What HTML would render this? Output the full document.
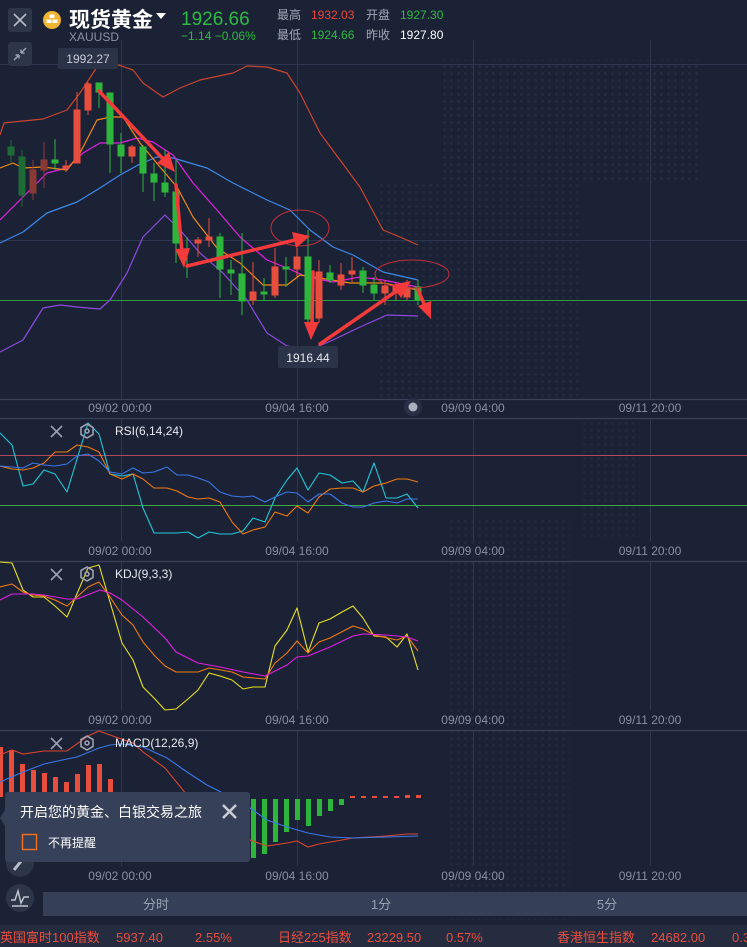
<!DOCTYPE html>
<html><head><meta charset="utf-8"><style>
html,body{margin:0;padding:0;background:#1c2236;width:747px;height:947px;overflow:hidden;font-family:"Liberation Sans","Noto Sans CJK SC",sans-serif;}
svg{position:absolute;left:0;top:0}
.t{font-family:"Liberation Sans","Noto Sans CJK SC",sans-serif}
</style></head><body>
<svg width="747" height="947" viewBox="0 0 747 947" class="t">
<defs>
<pattern id="dots" width="7" height="7" patternUnits="userSpaceOnUse"><circle cx="3.5" cy="3.5" r="1.5" fill="#262d42"/></pattern>
</defs>
<rect width="747" height="947" fill="#1c2236"/>
<!-- faint map dots -->
<rect x="440" y="60" width="260" height="120" fill="url(#dots)" opacity="0.8"/>
<rect x="380" y="180" width="200" height="220" fill="url(#dots)" opacity="0.7"/>
<rect x="450" y="520" width="120" height="400" fill="url(#dots)" opacity="0.6"/>
<rect x="580" y="420" width="60" height="120" fill="url(#dots)" opacity="0.5"/>

<!-- grid main -->
<g stroke="#2e3650" stroke-width="1">
<line x1="121.5" y1="40" x2="121.5" y2="399"/><line x1="297.5" y1="40" x2="297.5" y2="399"/><line x1="473.5" y1="40" x2="473.5" y2="399"/><line x1="650.5" y1="40" x2="650.5" y2="399"/>
<line x1="0" y1="64.5" x2="747" y2="64.5"/><line x1="0" y1="240.5" x2="747" y2="240.5"/>
<line x1="121.5" y1="418" x2="121.5" y2="541"/><line x1="297.5" y1="418" x2="297.5" y2="541"/><line x1="473.5" y1="418" x2="473.5" y2="541"/><line x1="650.5" y1="418" x2="650.5" y2="541"/>
<line x1="121.5" y1="562" x2="121.5" y2="710"/><line x1="297.5" y1="562" x2="297.5" y2="710"/><line x1="473.5" y1="562" x2="473.5" y2="710"/><line x1="650.5" y1="562" x2="650.5" y2="710"/>
<line x1="121.5" y1="731" x2="121.5" y2="866"/><line x1="297.5" y1="731" x2="297.5" y2="866"/><line x1="473.5" y1="731" x2="473.5" y2="866"/><line x1="650.5" y1="731" x2="650.5" y2="866"/>
</g>
<g stroke="#3a4259" stroke-width="1.2">
<line x1="0" y1="399.5" x2="747" y2="399.5"/><line x1="0" y1="418.5" x2="747" y2="418.5"/><line x1="0" y1="561.5" x2="747" y2="561.5"/><line x1="0" y1="730.5" x2="747" y2="730.5"/>
</g>
<line x1="0" y1="300.5" x2="747" y2="300.5" stroke="#2f9a3e" stroke-width="1"/>
<line x1="0" y1="455.5" x2="747" y2="455.5" stroke="#b04a5a" stroke-width="1"/>
<line x1="0" y1="505.5" x2="747" y2="505.5" stroke="#3fa845" stroke-width="1"/>

<!-- BOLL & MA -->
<g fill="none" stroke-width="1.2" stroke-linejoin="round">
<polyline stroke="#c9452d" points="0,135 4,123 13,122 43,119 67,110 80,93 97,67 110,62 133,70 143,83 163,97 180,88 200,80 233,73 247,66 267,67 287,73 300,93 320,133 340,160 360,187 383,230 400,237 418,245"/>
<polyline stroke="#3d8ae8" points="0,243 23,232 47,213 77,202 100,188 120,175 140,164 157,157 173,158 207,168 233,183 267,200 290,210 310,230 333,247 353,255 383,272 418,280"/>
<polyline stroke="#8c4ae0" points="0,352 23,340 43,308 60,305 77,307 100,309 110,300 127,273 143,237 165,215 180,230 200,253 223,273 247,300 267,333 287,346 310,350 333,340 360,327 387,315 418,316"/>
<polyline stroke="#e020e0" points="0,220 23,197 47,173 67,168 83,153 100,143 120,143 137,138 153,142 173,155 193,183 217,210 240,237 267,260 287,268 307,277 333,282 360,277 383,280 418,287"/>
<polyline stroke="#f08a10" points="0,168 13,163 23,168 43,167 67,170 80,153 97,120 110,117 123,117 140,143 160,167 177,187 193,217 217,248 240,263 263,285 287,285 300,275 320,278 350,283 383,283 418,290"/>
</g>

<!-- candles -->
<g stroke-width="1">
<g stroke="#1f6b35" fill="#1f6b35"><line x1="11" y1="140" x2="11" y2="162"/><rect x="8" y="147" width="6" height="8"/><line x1="22" y1="150" x2="22" y2="207"/><rect x="19" y="157" width="6" height="38"/></g>
<g stroke="#8a3a35" fill="#8a3a35"><line x1="33" y1="160" x2="33" y2="200"/><rect x="30" y="170" width="6" height="23"/><line x1="44" y1="142" x2="44" y2="188"/><rect x="41" y="160" width="6" height="10"/></g>
<g stroke="#2db53c" fill="#2db53c">
<line x1="55" y1="139" x2="55" y2="170"/><rect x="52" y="160" width="6" height="3"/>
<line x1="99" y1="83" x2="99" y2="108"/><rect x="96" y="83" width="6" height="9"/>
<line x1="110" y1="93" x2="110" y2="173"/><rect x="107" y="93" width="6" height="51"/>
<line x1="121" y1="133" x2="121" y2="173"/><rect x="118" y="145" width="6" height="11"/>
<line x1="143" y1="145" x2="143" y2="192"/><rect x="140" y="147" width="6" height="26"/>
<line x1="154" y1="163" x2="154" y2="201"/><rect x="151" y="174" width="6" height="8"/>
<line x1="165" y1="150" x2="165" y2="197"/><rect x="162" y="183" width="6" height="9"/>
<line x1="176" y1="160" x2="176" y2="263"/><rect x="173" y="192" width="6" height="51"/>
<line x1="187" y1="237" x2="187" y2="278"/>
<line x1="220" y1="233" x2="220" y2="298"/><rect x="217" y="237" width="6" height="32"/>
<line x1="231" y1="260" x2="231" y2="295"/><rect x="228" y="270" width="6" height="3"/>
<line x1="242" y1="233" x2="242" y2="315"/><rect x="239" y="274" width="6" height="27"/>
<line x1="264" y1="278" x2="264" y2="301"/><rect x="261" y="292" width="6" height="2"/>
<line x1="286" y1="257" x2="286" y2="287"/><rect x="283" y="267" width="6" height="2"/>
<line x1="308" y1="230" x2="308" y2="323"/><rect x="305" y="257" width="6" height="62"/>
<line x1="330" y1="265" x2="330" y2="283"/><rect x="327" y="273" width="6" height="7"/>
<line x1="363" y1="267" x2="363" y2="293"/><rect x="360" y="271" width="6" height="14"/>
<line x1="374" y1="277" x2="374" y2="300"/><rect x="371" y="285" width="6" height="8"/>
<line x1="418" y1="280" x2="418" y2="305"/><rect x="415" y="287" width="6" height="13"/>
</g>
<g stroke="#e84e3e" fill="#e84e3e">
<line x1="66" y1="160" x2="66" y2="172"/><rect x="63" y="166" width="6" height="2"/>
<line x1="77" y1="92" x2="77" y2="163"/><rect x="74" y="110" width="6" height="53"/>
<line x1="88" y1="82" x2="88" y2="115"/><rect x="85" y="84" width="6" height="26"/>
<line x1="132" y1="145" x2="132" y2="163"/><rect x="129" y="147" width="6" height="9"/>
<line x1="198" y1="237" x2="198" y2="257"/><rect x="195" y="240" width="6" height="3"/>
<line x1="209" y1="218" x2="209" y2="247"/><rect x="206" y="237" width="6" height="3"/>
<line x1="253" y1="262" x2="253" y2="305"/><rect x="250" y="292" width="6" height="8"/>
<line x1="275" y1="248" x2="275" y2="298"/><rect x="272" y="267" width="6" height="28"/>
<line x1="297" y1="248" x2="297" y2="277"/><rect x="294" y="257" width="6" height="12"/>
<line x1="319" y1="260" x2="319" y2="323"/><rect x="316" y="272" width="6" height="46"/>
<line x1="341" y1="263" x2="341" y2="290"/><rect x="338" y="275" width="6" height="10"/>
<line x1="352" y1="257" x2="352" y2="282"/><rect x="349" y="271" width="6" height="3"/>
<line x1="385" y1="280" x2="385" y2="305"/><rect x="382" y="286" width="6" height="7"/>
<line x1="396" y1="282" x2="396" y2="300"/><rect x="393" y="287" width="6" height="6"/>
<line x1="407" y1="280" x2="407" y2="300"/><rect x="404" y="287" width="6" height="10"/>
</g>
</g>

<!-- ellipses -->
<ellipse cx="300" cy="228" rx="29" ry="18" fill="none" stroke="#c0303a" stroke-width="1"/>
<ellipse cx="412" cy="274" rx="37" ry="14" fill="none" stroke="#c0303a" stroke-width="1"/>

<!-- arrows -->
<g stroke="#f43a3a" stroke-width="3.5" fill="#f43a3a" stroke-linecap="round">
<line x1="99" y1="91" x2="166" y2="162"/><polygon points="175,172 157,163 169,152" stroke="none"/>
<line x1="176" y1="185" x2="182" y2="252"/><polygon points="184,268 175,249 190,248" stroke="none"/>
<line x1="187" y1="266" x2="295" y2="240"/><polygon points="310,236 292,232 296,248" stroke="none"/>
<line x1="313" y1="272" x2="312" y2="325"/><polygon points="311,340 304,322 319,322" stroke="none"/>
<line x1="320" y1="344" x2="398" y2="290"/><polygon points="411,281 392,285 401,298" stroke="none"/>
<line x1="418" y1="290" x2="425" y2="306"/><polygon points="431,319 418,306 431,301" stroke="none"/>
</g>

<!-- price labels -->
<rect x="58" y="48" width="60" height="21" rx="2" fill="#2b3349"/>
<text x="88" y="63" font-size="12" fill="#c8ccd6" text-anchor="middle">1992.27</text>
<rect x="278" y="346" width="60" height="22" rx="2" fill="#2b3349"/>
<text x="308" y="362" font-size="12" fill="#e6e8ee" text-anchor="middle">1916.44</text>

<!-- date labels -->
<g font-size="12" fill="#8790a3" text-anchor="middle">
<text x="120" y="412">09/02 00:00</text><text x="297" y="412">09/04 16:00</text><text x="473" y="412">09/09 04:00</text><text x="650" y="412">09/11 20:00</text>
<text x="120" y="555">09/02 00:00</text><text x="297" y="555">09/04 16:00</text><text x="473" y="555">09/09 04:00</text><text x="650" y="555">09/11 20:00</text>
<text x="120" y="724">09/02 00:00</text><text x="297" y="724">09/04 16:00</text><text x="473" y="724">09/09 04:00</text><text x="650" y="724">09/11 20:00</text>
<text x="120" y="880">09/02 00:00</text><text x="297" y="880">09/04 16:00</text><text x="473" y="880">09/09 04:00</text><text x="650" y="880">09/11 20:00</text>
</g>
<circle cx="413" cy="407" r="9" fill="#283047"/><circle cx="413" cy="407" r="4.5" fill="#a9afbd"/>

<!-- RSI -->
<g fill="none" stroke-width="1.1" stroke-linejoin="round">
<polyline stroke="#1ec8d8" points="0,433 12,445 23,486 33,484 44,470 55,474 67,492 88,423 99,434 110,474 122,476 133,474 143,508 154,533 177,533 188,532 198,538 209,532 220,534 232,534 243,531 253,518 265,522 275,498 287,480 297,468 308,490 319,473 330,475 342,483 353,481 363,492 374,463 386,498 397,498 407,494 418,508"/>
<polyline stroke="#f07a10" points="0,466 12,469 23,470 33,468 44,463 55,452 67,452 77,445 88,447 99,452 110,474 122,479 133,474 143,479 154,488 167,488 177,491 188,497 198,499 209,498 220,502 232,522 243,534 253,530 265,527 275,512 287,516 297,506 308,513 319,497 330,489 342,488 353,488 363,492 374,486 386,483 397,479 407,479 418,482"/>
<polyline stroke="#3a78e8" points="0,466 23,468 33,463 44,465 55,466 67,464 77,456 88,454 99,461 110,472 122,474 133,468 143,473 154,472 167,467 177,475 188,475 198,478 209,482 220,492 232,496 243,497 253,496 265,502 275,497 287,492 297,493 308,502 319,494 330,494 342,503 353,507 363,507 374,503 386,501 397,503 407,499 418,499"/>
</g>
<!-- KDJ -->
<g fill="none" stroke-width="1.1" stroke-linejoin="round">
<polyline stroke="#e8e020" points="0,562 12,563 23,590 33,597 44,597 55,606 67,617 88,568 99,565 110,602 122,643 133,660 143,687 154,698 165,710 176,709 188,699 198,690 209,673 220,676 232,680 243,689 253,687 265,687 275,646 287,630 297,608 308,652 319,623 330,619 342,612 353,606 363,618 374,636 386,637 397,647 407,634 418,670"/>
<polyline stroke="#f07a10" points="0,587 12,584 23,592 33,595 44,596 55,600 67,606 88,587 99,582 110,597 122,615 133,625 143,642 154,655 165,666 176,672 198,672 209,668 232,672 243,677 265,679 275,663 287,653 297,641 308,653 319,642 330,638 353,626 363,629 374,635 397,640 407,636 418,651"/>
<polyline stroke="#e020e0" points="0,600 12,594 33,594 44,595 67,599 77,599 100,590 110,593 122,600 143,617 165,638 176,652 198,663 220,667 243,672 265,676 287,665 297,657 308,656 330,647 353,636 363,634 386,635 397,636 407,637 418,641"/>
</g>
<!-- MACD hist -->
<g fill="#e84e3e">
<rect x="-2" y="747" width="5" height="50"/><rect x="9" y="750" width="5" height="47"/><rect x="20" y="764" width="5" height="33"/><rect x="31" y="770" width="5" height="27"/><rect x="42" y="773" width="5" height="24"/><rect x="53" y="777" width="5" height="20"/><rect x="64" y="782" width="5" height="15"/><rect x="75" y="774" width="5" height="23"/><rect x="86" y="765" width="5" height="32"/><rect x="97" y="764" width="5" height="33"/><rect x="108" y="779" width="5" height="18"/>
<rect x="350" y="796" width="5" height="2"/><rect x="361" y="796" width="5" height="2"/><rect x="372" y="796" width="5" height="2"/><rect x="383" y="796" width="5" height="2"/><rect x="394" y="796" width="5" height="2"/><rect x="405" y="795" width="5" height="3"/><rect x="416" y="795" width="5" height="3"/>
</g>
<g fill="#2db53c">
<rect x="240" y="799" width="5" height="63"/><rect x="251" y="799" width="5" height="59"/><rect x="262" y="799" width="5" height="55"/><rect x="273" y="799" width="5" height="43"/><rect x="284" y="799" width="5" height="33"/><rect x="295" y="799" width="5" height="21"/><rect x="306" y="799" width="5" height="27"/><rect x="317" y="799" width="5" height="17"/><rect x="328" y="799" width="5" height="12"/><rect x="339" y="799" width="5" height="6"/>
</g>
<g fill="none" stroke-width="1.1">
<polyline stroke="#d8452d" points="0,755 12,750 23,754 44,751 67,751 88,736 99,731 110,735 133,743 143,752 165,768 187,795 210,815 250,840 267,846 287,843 297,841 308,847 319,844 342,840 353,838 386,836 407,834 418,834"/>
<polyline stroke="#3a78e8" points="0,782 23,772 44,764 67,759 77,757 99,748 110,745 122,744 143,747 167,758 187,772 207,785 227,795 250,808 267,820 287,827 308,833 330,837 353,838 386,837 418,836"/>
</g>

<!-- panel titles -->
<g stroke="#9aa1b1" stroke-width="1.6" fill="none">
<path d="M51 426 L62 437 M62 426 L51 437"/><path d="M51 569 L62 580 M62 569 L51 580"/><path d="M51 738 L62 749 M62 738 L51 749"/>
<polygon points="87,424 93,427.5 93,434.5 87,438 81,434.5 81,427.5"/><circle cx="87" cy="431" r="2"/>
<polygon points="87,567 93,570.5 93,577.5 87,581 81,577.5 81,570.5"/><circle cx="87" cy="574" r="2"/>
<polygon points="87,736 93,739.5 93,746.5 87,750 81,746.5 81,739.5"/><circle cx="87" cy="743" r="2"/>
</g>
<g font-size="12" fill="#e8eaf0">
<text x="115" y="435">RSI(6,14,24)</text><text x="115" y="578">KDJ(9,3,3)</text><text x="115" y="747">MACD(12,26,9)</text>
</g>

<!-- header -->
<rect x="8" y="8" width="24" height="24" rx="3" fill="#2d3549"/>
<path d="M14 14 L26 26 M26 14 L14 26" stroke="#b8bdc8" stroke-width="1.6"/>
<rect x="8" y="42" width="24" height="24" rx="3" fill="#2d3549"/>
<path d="M14 60 L19 55 M19 55 L15.5 55 M19 55 L19 58.5 M26 48 L21 53 M21 53 L24.5 53 M21 53 L21 49.5" stroke="#9aa1b1" stroke-width="1.5" fill="none"/>
<circle cx="52" cy="20" r="9" fill="#f0b432"/>
<rect x="49.5" y="14.5" width="5" height="3.5" fill="#fff"/><rect x="46.5" y="19.5" width="5" height="3.5" fill="#fff"/><rect x="52.5" y="19.5" width="5" height="3.5" fill="#fff"/>
<text x="69" y="27" font-size="21" fill="#ffffff" font-weight="bold" font-family="'Noto Sans CJK SC',sans-serif">现货黄金</text>
<polygon points="156,13 166,13 161,19" fill="#ffffff"/>
<text x="69" y="41" font-size="12" fill="#8a92a5">XAUUSD</text>
<text x="181" y="25" font-size="19" fill="#2dba42">1926.66</text>
<text x="181" y="40" font-size="12" fill="#2dba42">−1.14   −0.06%</text>
<g font-size="12">
<text x="277" y="19" fill="#a2a8b6">最高</text><text x="311" y="19" fill="#e8463c">1932.03</text>
<text x="366" y="19" fill="#a2a8b6">开盘</text><text x="400" y="19" fill="#2dba42">1927.30</text>
<text x="277" y="39" fill="#a2a8b6">最低</text><text x="311" y="39" fill="#2dba42">1924.66</text>
<text x="366" y="39" fill="#a2a8b6">昨收</text><text x="400" y="39" fill="#ffffff">1927.80</text>
</g>

<!-- left bottom buttons -->
<circle cx="20" cy="863" r="14" fill="#2d3549"/>
<path d="M14 870 L22 860" stroke="#b8bdc8" stroke-width="3"/>
<circle cx="20" cy="898" r="14" fill="#2d3549"/>
<path d="M11 900 L15 900 L18 891 L21 903 L24 897 L29 897 M12 906 L28 906" stroke="#c0c5cf" stroke-width="1.5" fill="none"/>

<!-- popup -->
<rect x="5" y="792" width="245" height="70" rx="3" fill="#364058"/>
<polygon points="5,810 0,818 5,826" fill="#364058"/>
<text x="20" y="817" font-size="14" fill="#ffffff">开启您的黄金、白银交易之旅</text>
<path d="M223 805 L236 818 M236 805 L223 818" stroke="#c8ccd6" stroke-width="2.6"/>
<rect x="22.5" y="834.5" width="14" height="15" fill="none" stroke="#f07020" stroke-width="1.4"/>
<text x="48" y="847" font-size="12" fill="#ffffff">不再提醒</text>

<!-- tabs -->
<rect x="43" y="892" width="704" height="24" fill="#353f57"/>
<g font-size="13" fill="#9aa1b1" text-anchor="middle">
<text x="156" y="909">分时</text><text x="381" y="909">1分</text><text x="607" y="909">5分</text>
</g>
<!-- ticker -->
<rect x="0" y="925" width="747" height="22" fill="#252c40"/>
<g font-size="13" fill="#e84e3e">
<text x="0" y="942">英国富时100指数</text><text x="116" y="942">5937.40</text><text x="195" y="942">2.55%</text>
<text x="278" y="942">日经225指数</text><text x="367" y="942">23229.50</text><text x="446" y="942">0.57%</text>
<text x="557" y="942">香港恒生指数</text><text x="651" y="942">24682.00</text><text x="732" y="942">0.3</text>
</g>
</svg>
</body></html>
